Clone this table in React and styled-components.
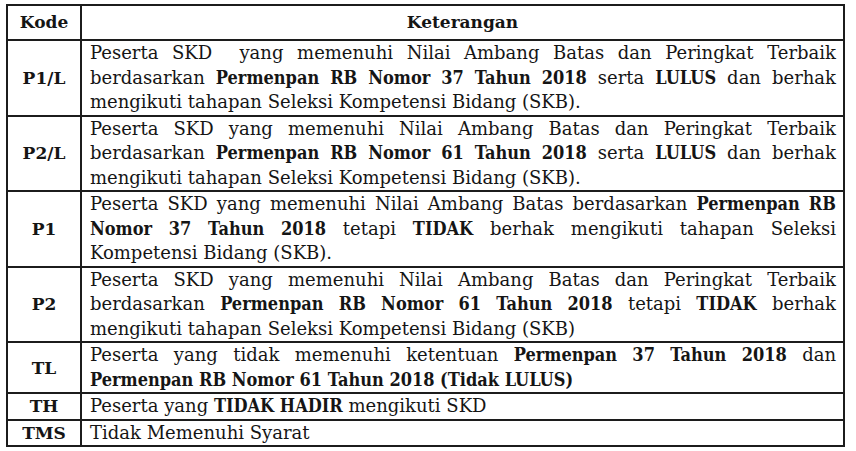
import React from 'react';
import styled, { createGlobalStyle } from 'styled-components';

const GlobalStyle = createGlobalStyle`
  html, body {
    margin: 0;
    padding: 0;
    background: #ffffff;
  }
  body {
    font-family: 'DejaVu Serif', 'Liberation Serif', serif;
    color: #151515;
  }
`;

const Page = styled.div`
  padding: 4px 0 0 6px;
`;

const Table = styled.table`
  width: 839px;
  border-collapse: collapse;
  border: 2px solid #1c1c1c;
  font-size: 17px;
`;

const HeadCell = styled.th`
  border: 2px solid #1c1c1c;
  padding: 4px 8px;
  line-height: 25px;
  font-weight: bold;
  text-align: center;
  width: ${(p) => p.width || 'auto'};
`;

const CodeCell = styled.td`
  border: 2px solid #1c1c1c;
  width: 72px;
  padding: 0;
  font-weight: bold;
  text-align: center;
  vertical-align: middle;
`;

const DescCell = styled.td`
  border: 2px solid #1c1c1c;
  padding: 0 7px 0 8px;
  vertical-align: top;
  font-size: 18px;

  b {
    font-family: 'DejaVu Serif Condensed', 'DejaVu Serif', serif;
    font-stretch: condensed;
    font-weight: bold;
  }
`;

const Line = styled.div`
  line-height: 24.5px;
  text-align: justify;
  text-align-last: ${(p) => (p.last ? 'left' : 'justify')};
`;

const rows = [
  {
    code: 'P1/L',
    lines: [
      <>Peserta SKD{'\u00a0'} yang memenuhi Nilai Ambang Batas dan Peringkat Terbaik</>,
      <>berdasarkan <b>Permenpan RB Nomor 37 Tahun 2018</b> serta <b>LULUS</b> dan berhak</>,
      <>mengikuti tahapan Seleksi Kompetensi Bidang (SKB).</>,
    ],
  },
  {
    code: 'P2/L',
    lines: [
      <>Peserta SKD yang memenuhi Nilai Ambang Batas dan Peringkat Terbaik</>,
      <>berdasarkan <b>Permenpan RB Nomor 61 Tahun 2018</b> serta <b>LULUS</b> dan berhak</>,
      <>mengikuti tahapan Seleksi Kompetensi Bidang (SKB).</>,
    ],
  },
  {
    code: 'P1',
    lines: [
      <>Peserta SKD yang memenuhi Nilai Ambang Batas berdasarkan <b>Permenpan RB</b></>,
      <><b>Nomor 37 Tahun 2018</b> tetapi <b>TIDAK</b> berhak mengikuti tahapan Seleksi</>,
      <>Kompetensi Bidang (SKB).</>,
    ],
  },
  {
    code: 'P2',
    lines: [
      <>Peserta SKD yang memenuhi Nilai Ambang Batas dan Peringkat Terbaik</>,
      <>berdasarkan <b>Permenpan RB Nomor 61 Tahun 2018</b> tetapi <b>TIDAK</b> berhak</>,
      <>mengikuti tahapan Seleksi Kompetensi Bidang (SKB)</>,
    ],
  },
  {
    code: 'TL',
    lines: [
      <>Peserta yang tidak memenuhi ketentuan <b>Permenpan 37 Tahun 2018</b> dan</>,
      <><b>Permenpan RB Nomor 61 Tahun 2018 (Tidak LULUS)</b></>,
    ],
  },
  {
    code: 'TH',
    lines: [<>Peserta yang <b>TIDAK HADIR</b> mengikuti SKD</>],
  },
  {
    code: 'TMS',
    lines: [<>Tidak Memenuhi Syarat</>],
  },
];

export default function App() {
  return (
    <>
      <GlobalStyle />
      <Page>
        <Table>
          <thead>
            <tr>
              <HeadCell width="56px">Kode</HeadCell>
              <HeadCell>Keterangan</HeadCell>
            </tr>
          </thead>
          <tbody>
            {rows.map((row) => (
              <tr key={row.code}>
                <CodeCell>{row.code}</CodeCell>
                <DescCell>
                  {row.lines.map((line, i) => (
                    <Line key={i} last={i === row.lines.length - 1}>
                      {line}
                    </Line>
                  ))}
                </DescCell>
              </tr>
            ))}
          </tbody>
        </Table>
      </Page>
    </>
  );
}
